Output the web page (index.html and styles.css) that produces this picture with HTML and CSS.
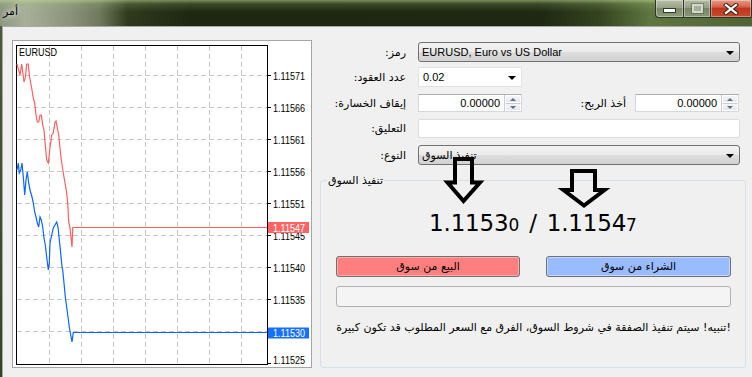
FILE: index.html
```html
<!DOCTYPE html>
<html lang="ar">
<head>
<meta charset="utf-8">
<title>أمر</title>
<link rel="stylesheet" href="styles.css">
</head>
<body>
<div class="window">
  <div class="titlebar">
    <span class="title">أمر</span>
    <div class="caption-btns">
      <div class="cbtn cmin"><span class="min-bar"></span></div>
      <div class="cbtn cmax"><span class="max-box"></span></div>
      <div class="cbtn cclose">
        <svg width="16" height="12" viewBox="0 0 16 12">
          <path d="M3 2 L13 10 M13 2 L3 10" stroke="#3a2a20" stroke-width="4.2" stroke-linecap="square"/>
          <path d="M3 2 L13 10 M13 2 L3 10" stroke="#ffffff" stroke-width="2.2" stroke-linecap="square"/>
        </svg>
      </div>
    </div>
  </div>
  <div class="content">
    <div class="chart">
      <svg class="chart-svg" width="298" height="326" viewBox="13 41 298 326">
        <g stroke="#c6c6c6" stroke-width="1" stroke-dasharray="5 3" shape-rendering="crispEdges">
          <line x1="17" y1="75.5" x2="267" y2="75.5"/>
          <line x1="17" y1="107.5" x2="267" y2="107.5"/>
          <line x1="17" y1="139.5" x2="267" y2="139.5"/>
          <line x1="17" y1="171.5" x2="267" y2="171.5"/>
          <line x1="17" y1="203.5" x2="267" y2="203.5"/>
          <line x1="17" y1="235.5" x2="267" y2="235.5"/>
          <line x1="17" y1="267.5" x2="267" y2="267.5"/>
          <line x1="17" y1="299.5" x2="267" y2="299.5"/>
          <line x1="17" y1="331.5" x2="267" y2="331.5"/>
          <line x1="49.5" y1="46" x2="49.5" y2="364"/>
          <line x1="81.5" y1="46" x2="81.5" y2="364"/>
          <line x1="113.5" y1="46" x2="113.5" y2="364"/>
          <line x1="145.5" y1="46" x2="145.5" y2="364"/>
          <line x1="177.5" y1="46" x2="177.5" y2="364"/>
          <line x1="209.5" y1="46" x2="209.5" y2="364"/>
          <line x1="241.5" y1="46" x2="241.5" y2="364"/>
        </g>
        <rect x="16.5" y="45.5" width="251" height="319" fill="none" stroke="#000" stroke-width="1" shape-rendering="crispEdges"/>
        <g stroke="#000" stroke-width="1" shape-rendering="crispEdges">
          <line x1="267" y1="75.5" x2="271" y2="75.5"/>
          <line x1="267" y1="107.5" x2="271" y2="107.5"/>
          <line x1="267" y1="139.5" x2="271" y2="139.5"/>
          <line x1="267" y1="171.5" x2="271" y2="171.5"/>
          <line x1="267" y1="203.5" x2="271" y2="203.5"/>
          <line x1="267" y1="235.5" x2="271" y2="235.5"/>
          <line x1="267" y1="267.5" x2="271" y2="267.5"/>
          <line x1="267" y1="299.5" x2="271" y2="299.5"/>
          <line x1="267" y1="331.5" x2="271" y2="331.5"/>
          <line x1="267" y1="363.5" x2="271" y2="363.5"/>
        </g>
        <polyline fill="none" stroke="#ff5f5f" stroke-width="1.2" points="17,64 18,68 20,75 21.7,64 22.7,72 24,82 25.3,78 26.7,64 28.3,64 29.3,75 30.7,83 32,90 33.3,98 34.7,103 36,115 37.3,122 38.7,122 40,115 41.3,115 42.7,125 44,130 45.3,145 46.7,160 48.3,163 50,148 51.7,135 53.3,133 55,122 56,121 57.3,128 58.7,135 60,148 61.3,160 63.3,173 65,183 66.7,193 67.7,203 68.7,222 70,228 71,238 72,247 72.7,228 73.3,227.5 267,227.5"/>
        <polyline fill="none" stroke="#0a64ff" stroke-width="1.2" points="17,170 18.3,163 19.3,173 20.7,170 22,163 23.3,177 24.7,195 26,180 27.3,172 28.7,183 30,190 32,197 33.3,203 34.7,212 36,217 37.3,223 38.7,227 40,217 41.3,220 42.7,227 44,238 45.3,245 46.7,257 48.3,270 49.3,263 50,243 51.7,235 53.3,228 55,225 56.7,222 58,227 59.3,240 60.7,253 62,267 62.7,270 64,283 65.3,297 66.7,307 68,317 69.3,327 70.7,335 72,342 72.7,337 73.3,332.5 267,332.5"/>
        <text class="ax" x="19" y="56" textLength="38" lengthAdjust="spacingAndGlyphs">EURUSD</text>
        <text class="ax" x="273" y="80" textLength="32" lengthAdjust="spacingAndGlyphs">1.11571</text>
        <text class="ax" x="273" y="112" textLength="32" lengthAdjust="spacingAndGlyphs">1.11566</text>
        <text class="ax" x="273" y="144" textLength="32" lengthAdjust="spacingAndGlyphs">1.11561</text>
        <text class="ax" x="273" y="176" textLength="32" lengthAdjust="spacingAndGlyphs">1.11556</text>
        <text class="ax" x="273" y="208" textLength="32" lengthAdjust="spacingAndGlyphs">1.11551</text>
        <text class="ax" x="273" y="240" textLength="32" lengthAdjust="spacingAndGlyphs">1.11545</text>
        <text class="ax" x="273" y="272" textLength="32" lengthAdjust="spacingAndGlyphs">1.11540</text>
        <text class="ax" x="273" y="304" textLength="32" lengthAdjust="spacingAndGlyphs">1.11535</text>
        <text class="ax" x="273" y="364" textLength="32" lengthAdjust="spacingAndGlyphs">1.11525</text>
        <rect x="268" y="222" width="41" height="11" fill="#ff6464"/>
        <text class="ax tag" x="273" y="231.5" textLength="32" lengthAdjust="spacingAndGlyphs">1.11547</text>
        <rect x="268" y="327.5" width="41" height="11" fill="#1670ff"/>
        <text class="ax tag" x="273" y="337" textLength="32" lengthAdjust="spacingAndGlyphs">1.11530</text>
      </svg>
    </div>

    <div class="form">
      <div class="row r1">
        <span class="lbl" dir="rtl">رمز:</span>
        <div class="combo wide"><span class="ctext">EURUSD, Euro vs US Dollar</span><span class="tri"></span></div>
      </div>
      <div class="row r2">
        <span class="lbl" dir="rtl">عدد العقود:</span>
        <div class="drop"><span class="ctext">0.02</span><span class="tri"></span></div>
      </div>
      <div class="row r3">
        <span class="lbl" dir="rtl">إيقاف الخسارة:</span>
        <div class="spin"><span class="sval">0.00000</span><span class="sbtns"><span class="sb"><span class="up"></span></span><span class="sb"><span class="dn"></span></span></span></div>
        <span class="lbl2" dir="rtl">أخذ الربح:</span>
        <div class="spin"><span class="sval">0.00000</span><span class="sbtns"><span class="sb"><span class="up"></span></span><span class="sb"><span class="dn"></span></span></span></div>
      </div>
      <div class="row r4">
        <span class="lbl" dir="rtl">التعليق:</span>
        <div class="textbox"></div>
      </div>
      <div class="row r5">
        <span class="lbl" dir="rtl">النوع:</span>
        <div class="combo wide"><span class="ctext" dir="rtl">تنفيذ السوق</span><span class="tri"></span></div>
      </div>

      <div class="group">
        <span class="legend" dir="rtl">تنفيذ السوق</span>
        <div class="price">1.1153<span class="small">0</span><span class="slash">/</span>1.1154<span class="small">7</span></div>
        <div class="btns">
          <div class="btn sell" dir="rtl">البيع من سوق</div>
          <div class="btn buy" dir="rtl">الشراء من سوق</div>
        </div>
        <div class="progress"></div>
        <div class="warn" dir="ltr">تنبيه! سيتم تنفيذ الصفقة في شروط السوق، الفرق مع السعر المطلوب قد تكون كبيرة!</div>
      </div>
    </div>
  </div>

  <svg class="arrows" width="752" height="377" viewBox="0 0 752 377">
    <path d="M455 159 H472 V182.5 H480 L463.5 201 L447.5 182.5 H455 Z" fill="none" stroke="#000" stroke-width="4" stroke-linejoin="miter"/>
    <path d="M572 171 H595 V190 H604.5 L584 205.5 L563.5 190 H572 Z" fill="none" stroke="#000" stroke-width="4" stroke-linejoin="miter"/>
  </svg>
</div>
</body>
</html>
```

FILE: styles.css
```css
html, body {
  margin: 0;
  padding: 0;
  background: #f0f0f0;
  overflow: hidden;
}

body {
  font-family: "Liberation Sans", "DejaVu Sans", sans-serif;
  font-size: 11px;
  color: #000;
}

.window {
  position: relative;
  width: 752px;
  height: 377px;
  display: flex;
  flex-direction: column;
  background: linear-gradient(to bottom, #4d5c3a 0, #35452a 100%);
}

.titlebar {
  height: 26px;
  flex: none;
  display: flex;
  align-items: flex-start;
  background:
    linear-gradient(to bottom, rgba(196, 222, 150, 0.55) 0, rgba(160, 190, 120, 0.22) 4px, rgba(0, 0, 0, 0) 12px),
    linear-gradient(to right, #8b9680 0, #a9b09a 25px, #8b937b 70px, #6e785c 100px, #2f3a1d 128px, #1e2712 190px, #1e2812 540px, #34441f 600px, #5f7640 650px, #4e6434 752px);
}

.title {
  margin: 5px 0 0 3px;
  font-family: "DejaVu Sans", sans-serif;
  font-size: 11px;
  line-height: 14px;
  color: #000;
  text-shadow: 0 0 4px rgba(255, 255, 255, 0.9), 0 0 8px rgba(255, 255, 255, 0.6);
}

.caption-btns {
  margin-left: auto;
  display: flex;
  height: 18px;
}

.cbtn {
  box-sizing: border-box;
  height: 18px;
  display: flex;
  align-items: center;
  justify-content: center;
  border: 1px solid #2d3626;
  border-top: none;
  box-shadow: inset 0 0 0 1px rgba(255, 255, 255, 0.35);
}

.cmin {
  width: 28px;
  border-right: none;
  border-bottom-left-radius: 4px;
  background: linear-gradient(to bottom, #b8c0a8 0, #97a287 45%, #7b8869 50%, #8e9c7a 100%);
}

.cmax {
  width: 27px;
  border-right: none;
  background: linear-gradient(to bottom, #b4bca4 0, #939e84 45%, #788566 50%, #8a9877 100%);
}

.cclose {
  width: 42px;
  background: linear-gradient(to bottom, #e89a88 0, #d4644a 40%, #c0361c 50%, #c84a2c 100%);
  border-bottom-right-radius: 2px;
}

.min-bar {
  width: 11px;
  height: 3px;
  margin-top: 4px;
  background: #fff;
  border: 1px solid #2f3a28;
}

.max-box {
  box-sizing: border-box;
  width: 11px;
  height: 9px;
  border: 2px solid #d4d8cc;
  background: #a5ae96;
  outline: 1px solid rgba(80, 90, 70, 0.5);
}

.content {
  flex: 1;
  margin-left: 2px;
  border-left: 1px solid #a8a8a8;
  border-top: 1px solid #a8a8a8;
  background: #f0f0f0;
  display: flex;
  align-items: flex-start;
}

.chart {
  box-sizing: border-box;
  width: 300px;
  height: 328px;
  margin: 13px 0 0 9px;
  border: 1px solid #a5a5a5;
  background: #fff;
}

.chart-svg {
  display: block;
}

.ax {
  font-family: "Liberation Sans", sans-serif;
  font-size: 11px;
  fill: #000;
}

.tag {
  fill: #fff;
}

.form {
  width: 426px;
  margin: 15px 0 0 8px;
  display: flex;
  flex-direction: column;
}

.row {
  width: 420px;
  display: flex;
  align-items: center;
}

.r1 { height: 20px; }
.r2 { height: 20px; margin-top: 5px; }
.r3 { height: 18px; margin-top: 7px; }
.r4 { height: 19px; margin-top: 7px; }
.r5 { height: 20px; margin-top: 7px; }

.lbl {
  width: 86px;
  margin-right: 12px;
  text-align: right;
  font-family: "DejaVu Sans", sans-serif;
  font-size: 11px;
  white-space: nowrap;
}

.lbl2 {
  width: 104px;
  margin-right: 9px;
  text-align: right;
  font-family: "DejaVu Sans", sans-serif;
  font-size: 11px;
  white-space: nowrap;
}

.combo {
  box-sizing: border-box;
  height: 20px;
  border: 1px solid #707070;
  border-radius: 3px;
  background: linear-gradient(to bottom, #f2f2f2 0, #ebebeb 50%, #dddddd 51%, #d2d2d2 100%);
  display: flex;
  align-items: center;
  padding: 0 5px 0 3px;
}

.wide { width: 322px; }

.ctext {
  flex: 1;
  white-space: nowrap;
  overflow: hidden;
  text-align: left;
  font-family: "Liberation Sans", "DejaVu Sans", sans-serif;
}

.tri {
  width: 0;
  height: 0;
  border-left: 4px solid transparent;
  border-right: 4px solid transparent;
  border-top: 4px solid #000;
  margin-top: 1px;
}

.drop {
  box-sizing: border-box;
  width: 104px;
  height: 20px;
  border: 1px solid #e2e2e2;
  background: #fff;
  display: flex;
  align-items: center;
  padding: 0 5px 0 4px;
}

.spin {
  box-sizing: border-box;
  width: 104px;
  height: 18px;
  border: 1px solid #d4d7dd;
  border-top-color: #abadb3;
  background: #fff;
  display: flex;
}

.sval {
  flex: 1;
  text-align: right;
  padding-right: 4px;
  line-height: 16px;
}

.sbtns {
  width: 16px;
  display: flex;
  flex-direction: column;
  border-left: 1px solid #c9ccd2;
}

.sb {
  flex: 1;
  display: flex;
  align-items: center;
  justify-content: center;
  background: linear-gradient(to bottom, #f4f5f7 0, #e4e7ec 100%);
  border: 1px solid #fff;
}

.sb + .sb {
  border-top: 1px solid #c9ccd2;
}

.up, .dn {
  width: 0;
  height: 0;
  border-left: 3px solid transparent;
  border-right: 3px solid transparent;
}

.up { border-bottom: 3px solid #5b6f8a; }
.dn { border-top: 3px solid #5b6f8a; }

.textbox {
  box-sizing: border-box;
  width: 322px;
  height: 19px;
  background: #fff;
  border: 1px solid #dcdcdc;
  border-radius: 2px;
}

.group {
  box-sizing: border-box;
  margin-top: 15px;
  width: 426px;
  height: 188px;
  border: 1px solid #d5dfe5;
  border-radius: 3px;
  display: flex;
  flex-direction: column;
}

.legend {
  align-self: flex-start;
  margin: -7px 0 0 6px;
  padding: 0 1px;
  background: #f0f0f0;
  line-height: 13px;
  font-family: "DejaVu Sans", sans-serif;
  font-size: 11px;
}

.price {
  margin-top: 21px;
  height: 30px;
  line-height: 30px;
  text-align: center;
  font-family: "DejaVu Sans", sans-serif;
  font-size: 23px;
  letter-spacing: -0.2px;
  color: #000;
  white-space: nowrap;
}

.small {
  font-size: 17px;
  letter-spacing: 0;
}

.slash {
  margin: 0 10px;
}

.btns {
  display: flex;
  gap: 26px;
  margin: 18px 14px 0 15px;
}

.btn {
  box-sizing: border-box;
  height: 21px;
  border: 1px solid #707070;
  border-radius: 3px;
  display: flex;
  align-items: center;
  justify-content: center;
  font-family: "DejaVu Sans", sans-serif;
  font-size: 11px;
}

.sell {
  width: 184px;
  background: #ff7f7f;
  box-shadow: inset 0 0 0 1px #ffa9a9;
}

.buy {
  width: 185px;
  background: #99bbff;
  box-shadow: inset 0 0 0 1px #c4d6ff;
}

.progress {
  box-sizing: border-box;
  height: 21px;
  margin: 9px 14px 0 15px;
  border: 1px solid #b2b2b2;
  border-radius: 3px;
  background: #f4f4f4;
}

.warn {
  margin: 14px 14px 0 15px;
  line-height: 14px;
  text-align: center;
  font-family: "DejaVu Sans", sans-serif;
  font-size: 11px;
  white-space: nowrap;
}

.arrows {
  position: absolute;
  left: 0;
  top: 0;
  pointer-events: none;
}
```
